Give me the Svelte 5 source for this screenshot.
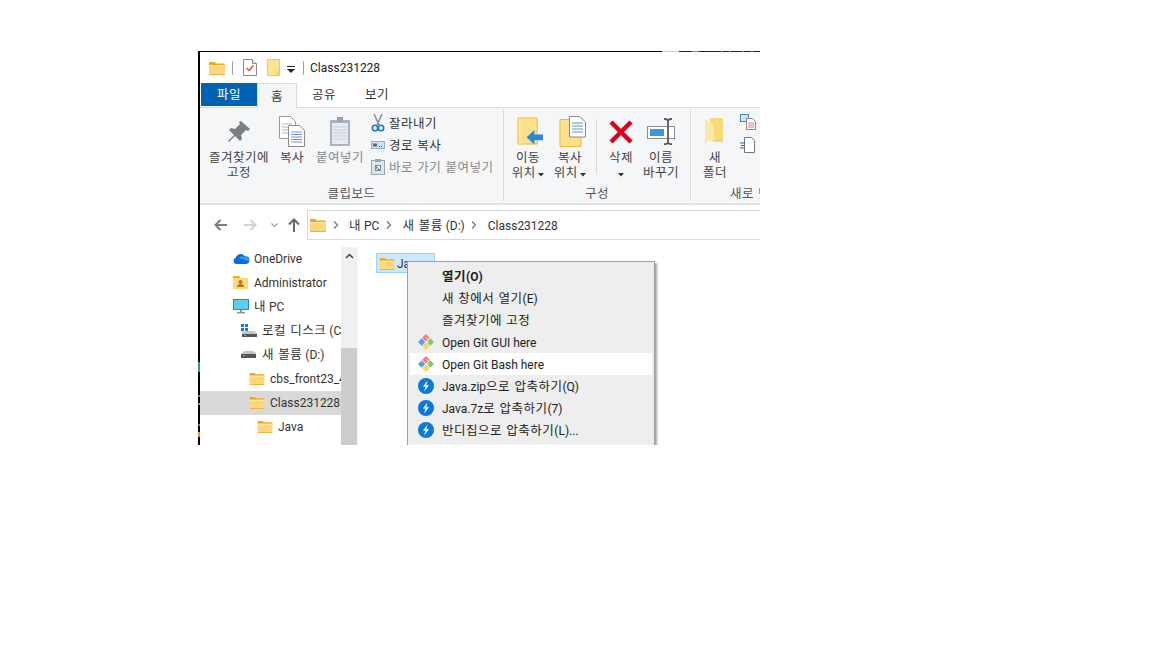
<script>
    const navItems = [
        { label: "OneDrive", icon: "cloud", indent: 33 },
        { label: "Administrator", icon: "user", indent: 33 },
        { label: "내 PC", icon: "pc", indent: 33 },
        { label: "로컬 디스크 (C:)", icon: "diskc", indent: 41 },
        { label: "새 볼륨 (D:)", icon: "disk", indent: 41 },
        { label: "cbs_front23_4", icon: "folder", indent: 49 },
        { label: "Class231228", icon: "folder", indent: 49, active: true },
        { label: "Java", icon: "folder", indent: 57 },
        { label: "", icon: "folder", indent: 57 }
    ]

    const menuItems = [
        { label: "열기(O)", bold: true },
        { label: "새 창에서 열기(E)" },
        { label: "즐겨찾기에 고정" },
        { label: "Open Git GUI here", icon: "git" },
        { label: "Open Git Bash here", icon: "git", hover: true },
        { label: "Java.zip으로 압축하기(Q)", icon: "bz" },
        { label: "Java.7z로 압축하기(7)", icon: "bz" },
        { label: "반디집으로 압축하기(L)..." , icon: "bz" }
    ]

    // hangul and latin need different sizes to get the Malgun/Segoe widths
    function runs(text) {
        return text.split(/([가-힣]+(?: [가-힣]+)*)/).filter(Boolean)
    }
    function isKo(run) {
        return /[가-힣]/.test(run)
    }
</script>

{#snippet t(text)}
    <span class="txt">{#each runs(text) as run}<span class={isKo(run) ? "ko" : "en"}>{run}</span>{/each}</span>
{/snippet}

{#snippet folder(w, h)}
    <svg width={w} height={h} viewBox="0 0 16 14">
        <path d="M0 2a1 1 0 0 1 1-1h4.500l1.500 1.500h8a1 1 0 0 1 1 1V5H0z" fill="#eeaa1c" />
        <path d="M0 4h16v9a1 1 0 0 1-1 1H1a1 1 0 0 1-1-1z" fill="#fcd87a" />
        <path d="M0 4h16v1H0z" fill="#fde9a8" />
        <path d="M0 13h16v1H0z" fill="#e8b34a" />
    </svg>
{/snippet}

{#snippet caret()}
    <svg class="caret" width="6" height="4" viewBox="0 0 6 4"><path d="M0 0h6L3 3.500z" fill="#333" /></svg>
{/snippet}

{#snippet chevron()}
    <svg class="chev" width="6" height="8" viewBox="0 0 6 8"><path d="M1 .5 4.500 4 1 7.500" fill="none" stroke="#777" stroke-width="1.300" /></svg>
{/snippet}

<div class="window">
    <div class="edge"></div>
    <div class="topline"></div>

    <div class="titlebar">
        {@render folder(16, 14)}
        <span class="tsep"></span>
        <svg width="14" height="17" viewBox="0 0 14 17">
            <path d="M.5.5h9l4 4v12H.5z" fill="#fff" stroke="#8a8a8a" />
            <path d="M9.500.5v4h4" fill="#eee" stroke="#8a8a8a" />
            <path d="M3.500 9l2.500 2.500L10.500 6.500" fill="none" stroke="#e2552b" stroke-width="1.500" />
        </svg>
        <svg class="note" width="13" height="17" viewBox="0 0 13 17">
            <path d="M.5.5h12v16H.5z" fill="#fde48f" stroke="#e9c868" />
            <path d="M9.500 12h3v4.500h-3z" fill="#f7cf62" />
        </svg>
        <svg class="qat" width="8" height="7" viewBox="0 0 8 7"><path d="M0 0h8v1H0zM0 3h8L4 7z" fill="#222" /></svg>
        <span class="tsep two"></span>
        <span class="title">{@render t("Class231228")}</span>
    </div>

    <div class="tabs">
        <div class="tab file">{@render t("파일")}</div>
        <div class="tab home">{@render t("홈")}</div>
        <div class="tab share">{@render t("공유")}</div>
        <div class="tab view">{@render t("보기")}</div>
    </div>

    <div class="ribbon">
        <section class="group g1">
            <div class="gbody">
                <div class="rbtn w62">
                    <div class="ico">
                        <svg width="24" height="24" viewBox="0 0 24 24">
                            <path d="M14 1l9 8-2 2-2-1-5 5 1 4-2 2-5-5-6 6-1-1 6-6-5-5 2-2 4 1 5-5-1-2z" fill="#7b7f84" />
                        </svg>
                    </div>
                    <div>{@render t("즐겨찾기에")}<br />{@render t("고정")}</div>
                </div>
                <div class="rbtn w44">
                    <div class="ico">
                        <svg width="26" height="31" viewBox="0 0 26 31">
                            <path d="M.5.5h11l5 5v17H.5z" fill="#fff" stroke="#9a9a9a" />
                            <path d="M3 8h10M3 11h10M3 14h10M3 17h10" stroke="#b5b5b5" />
                            <path d="M9.500 9.500h11l5 5v16h-16z" fill="#fff" stroke="#8a8a8a" />
                            <path d="M12 16h11M12 18.500h11M12 21h11M12 23.500h11M12 26h11" stroke="#6f97d6" />
                        </svg>
                    </div>
                    <div>{@render t("복사")}</div>
                </div>
                <div class="rbtn w52 off">
                    <div class="ico">
                        <svg width="22" height="30" viewBox="0 0 22 30">
                            <rect x="1" y="3" width="20" height="26" rx="1" fill="#a9b3c2" />
                            <rect x="3" y="6" width="16" height="21" fill="#e7ebf2" />
                            <path d="M4 10h14M4 13h14M4 16h14M4 19h14M4 22h14" stroke="#c8cfdb" />
                            <rect x="8" y="0" width="6" height="5" fill="#9aa3b0" />
                        </svg>
                    </div>
                    <div>{@render t("붙여넣기")}</div>
                </div>
                <div class="smalls">
                    <div class="sitem">
                        <svg width="14" height="18" viewBox="0 0 14 18">
                            <path d="M3 0l5 11M11 0 6 11" stroke="#8a8f96" stroke-width="1.500" fill="none" />
                            <circle cx="4" cy="14" r="2.700" fill="none" stroke="#1a78c8" stroke-width="1.600" />
                            <circle cx="10" cy="14" r="2.700" fill="none" stroke="#1a78c8" stroke-width="1.600" />
                        </svg>
                        {@render t("잘라내기")}
                    </div>
                    <div class="sitem">
                        <svg width="14" height="8" viewBox="0 0 14 8">
                            <rect x=".5" y=".5" width="13" height="7" fill="#cfe2f7" stroke="#8fb0d6" />
                            <path d="M2 2.500l1 3 1-3 1 3 1-3M8 5.500h1M10 5.500h1" stroke="#333" stroke-width=".8" fill="none" />
                        </svg>
                        {@render t("경로 복사")}
                    </div>
                    <div class="sitem off">
                        <svg width="14" height="16" viewBox="0 0 14 16">
                            <rect x=".5" y="1.500" width="13" height="14" fill="#dfe4eb" stroke="#9aa5b3" />
                            <rect x="4" y="0" width="6" height="3" fill="#9aa5b3" />
                            <path d="M4 6h6v6H4z" fill="#7e8a99" />
                            <path d="M5 11l3-3M6 7.500h2.500V10" stroke="#fff" fill="none" />
                        </svg>
                        {@render t("바로 가기 붙여넣기")}
                    </div>
                </div>
            </div>
            <div class="glabel">{@render t("클립보드")}</div>
        </section>

        <section class="group g2">
            <div class="gbody">
                <div class="rbtn w42">
                    <div class="ico shift">
                        <svg width="27" height="29" viewBox="0 0 28 29">
                            <path d="M1 .5h20v27H1z" fill="#fde08a" stroke="#e6bd45" />
                            <path d="M3 1v26" stroke="#fbeebd" />
                            <path d="M27 17.500h-9V13l-8 7.500 8 7.500v-4.500h9z" fill="#2b8ad8" />
                        </svg>
                    </div>
                    <div>{@render t("이동")}<br />{@render t("위치")} {@render caret()}</div>
                </div>
                <div class="rbtn w42">
                    <div class="ico shift">
                        <svg width="27" height="31" viewBox="0 0 27 31">
                            <path d="M1 3.500h21v27H1z" fill="#fde08a" stroke="#e6bd45" />
                            <path d="M10.500.5h10l6 5.500v15h-16z" fill="#fff" stroke="#8a8a8a" />
                            <path d="M13 7h11M13 10h11M13 13h11M13 16h11" stroke="#5f8fd2" />
                        </svg>
                    </div>
                    <div>{@render t("복사")}<br />{@render t("위치")} {@render caret()}</div>
                </div>
                <div class="vsep"></div>
                <div class="rbtn w40">
                    <div class="ico">
                        <svg width="26" height="26" viewBox="0 0 26 26">
                            <path d="M3 3l20 20M23 3 3 23" stroke="#d9001b" stroke-width="4.500" />
                        </svg>
                    </div>
                    <div>{@render t("삭제")}<br />{@render caret()}</div>
                </div>
                <div class="rbtn w40">
                    <div class="ico">
                        <svg width="29" height="27" viewBox="0 0 29 27">
                            <rect x=".5" y="8.500" width="27" height="12" fill="#fff" stroke="#8a8f96" />
                            <rect x="3" y="11" width="14" height="7" fill="#3a97e6" />
                            <path d="M21 1v25M17 .8q4 0 4 2.500 0-2.500 4-2.500M17 26.200q4 0 4-2.500 0 2.500 4 2.500" fill="none" stroke="#555" stroke-width="1.700" />
                        </svg>
                    </div>
                    <div>{@render t("이름")}<br />{@render t("바꾸기")}</div>
                </div>
            </div>
            <div class="glabel">{@render t("구성")}</div>
        </section>

        <section class="group g3">
            <div class="gbody">
                <div class="rbtn w42">
                    <div class="ico">
                        <svg width="20" height="28" viewBox="0 0 20 28">
                            <path d="M5 0h13v23H5z" fill="#f8d978" />
                            <path d="M0 1l8 5 2 17H3l-3 4z" fill="#fde9a6" />
                            <path d="M8 23h10" stroke="#e6c25a" />
                        </svg>
                    </div>
                    <div>{@render t("새")}<br />{@render t("폴더")}</div>
                </div>
                <div class="news">
                    <svg width="16" height="16" viewBox="0 0 16 16">
                        <rect x=".5" y=".5" width="8" height="7" fill="#cfe2f7" stroke="#4f86b0" />
                        <path d="M6.500 4.500h6l3 3v8h-9z" fill="#fff" stroke="#888" />
                        <path d="M8 9h6M8 11h6M8 13h6" stroke="#d77b9c" />
                    </svg>
                    <svg width="15" height="16" viewBox="0 0 15 16">
                        <path d="M4.500.5h7l3 3v12h-10z" fill="#fff" stroke="#777" />
                        <path d="M0 6h5M1 8.500h4M0 11h4" stroke="#1a6fc0" stroke-width="1.200" />
                    </svg>
                </div>
            </div>
            <div class="glabel clip">{@render t("새로 만들기")}</div>
        </section>
    </div>

    <div class="addressrow">
        <svg class="nav-a" width="13" height="12" viewBox="0 0 13 12"><path d="M13 6H1.500M6.500 1l-5 5 5 5" fill="none" stroke="#7d7d7d" stroke-width="2" /></svg>
        <svg class="nav-b" width="13" height="12" viewBox="0 0 13 12"><path d="M0 6h11.500M6.500 1l5 5-5 5" fill="none" stroke="#d2d2d2" stroke-width="2" /></svg>
        <svg class="nav-c" width="7" height="5" viewBox="0 0 7 5"><path d="M.5.500 3.500 3.500 6.500.5" fill="none" stroke="#999" stroke-width="1.200" /></svg>
        <svg class="nav-d" width="12" height="14" viewBox="0 0 12 14"><path d="M6 14V1.500M1 6.500l5-5 5 5" fill="none" stroke="#666" stroke-width="2" /></svg>
        <div class="address">
            {@render folder(16, 14)}
            {@render chevron()}
            {@render t("내 PC")}
            {@render chevron()}
            {@render t("새 볼륨 (D:)")}
            {@render chevron()}
            {@render t("Class231228")}
        </div>
    </div>

    <div class="content">
        <nav class="tree">
            {#each navItems as item}
                <div class="row" class:active={item.active} style:padding-left="{item.indent}px">
                    <span class="ticon">
                        {#if item.icon == "cloud"}
                            <svg width="17" height="11" viewBox="0 0 17 11">
                                <path d="M3.500 11a3.200 3.200 0 0 1-.6-6.300A5 5 0 0 1 12 3.400a3.800 3.800 0 0 1 1.200 7.600z" fill="#0a6fd0" />
                                <path d="M6 5.500a3 3 0 0 1 5-1 3.500 3.500 0 0 1 5 4l-5-2z" fill="#2f9af0" />
                            </svg>
                        {:else if item.icon == "user"}
                            <svg width="15" height="13" viewBox="0 0 15 13">
                                <path d="M0 0h6l1 2h8v11H0z" fill="#fcd87a" />
                                <path d="M0 0h6l1 2H0z" fill="#eeaa1c" />
                                <circle cx="7.500" cy="6" r="2" fill="#b5791a" />
                                <path d="M4 11q0-3 3.500-3T11 11z" fill="#b5791a" />
                            </svg>
                        {:else if item.icon == "pc"}
                            <svg width="16" height="15" viewBox="0 0 16 15">
                                <rect width="16" height="11" fill="#1f8fb5" />
                                <rect x="1" y="1" width="14" height="9" fill="#5fcdea" />
                                <path d="M7 11h2v2h3v1.500H4V13h3z" fill="#8a98a3" />
                            </svg>
                        {:else if item.icon == "diskc"}
                            <svg width="16" height="13" viewBox="0 0 16 13">
                                <path d="M0 0h3v3H0zM4 0h3v3H4zM0 4h3v3H0zM4 4h3v3H4z" fill="#1a78d2" />
                                <path d="M1 8l2-1h10l3 2v4H1z" fill="#c4c7c9" />
                                <path d="M1 10h15v3H1z" fill="#555" />
                                <path d="M3 11h2v1H3z" fill="#7ed321" />
                            </svg>
                        {:else if item.icon == "disk"}
                            <svg width="15" height="7" viewBox="0 0 15 7">
                                <path d="M1 2l2-2h9l3 2v1H0z" fill="#c4c7c9" />
                                <path d="M0 3h15v4H0z" fill="#555" />
                                <path d="M2 4h2v1H2z" fill="#7ed321" />
                            </svg>
                        {:else}
                            {@render folder(16, 13)}
                        {/if}
                    </span>
                    <span class="rowtext">{@render t(item.label)}</span>
                </div>
            {/each}
        </nav>

        <div class="scroll">
            <svg class="sup" width="9" height="6" viewBox="0 0 9 6"><path d="M1 5l3.500-3.500L8 5" fill="none" stroke="#444" stroke-width="1.500" /></svg>
            <div class="thumb"></div>
        </div>

        <div class="files">
            <div class="fileitem">
                {@render folder(16, 13)}
                {@render t("Java")}
            </div>
        </div>

        <div class="menu">
            {#each menuItems as m}
                <div class="mitem" class:hover={m.hover} class:bold={m.bold}>
                    <span class="micon">
                        {#if m.icon == "git"}
                            <svg width="16" height="16" viewBox="0 0 16 16">
                                <path d="M8 0l3.700 3.700L8 7.400 4.300 3.700z" fill="#f4787c" />
                                <path d="M12.300 4.300 16 8l-3.700 3.700L8.600 8z" fill="#82c95a" />
                                <path d="M8 8.600l3.700 3.700L8 16l-3.700-3.700z" fill="#f8d65f" />
                                <path d="M3.700 4.300 7.400 8l-3.700 3.700L0 8z" fill="#5f9df2" />
                                <path d="M8 3l2.500 3M8 8l3 0" stroke="#fff" stroke-width=".8" />
                            </svg>
                        {:else if m.icon == "bz"}
                            <svg width="16" height="16" viewBox="0 0 16 16">
                                <circle cx="8" cy="8" r="8" fill="#0c79d6" />
                                <path d="M9.500 2.500 5 8.500h2.600L6 13.500l5-6.200H8.300z" fill="#fff" />
                            </svg>
                        {/if}
                    </span>
                    {@render t(m.label)}
                </div>
            {/each}
        </div>
    </div>
</div>

<style>
    :global(body) {
        margin: 0;
        background: #fff;
    }
    .window {
        position: relative;
        box-sizing: border-box;
        width: 562px;
        height: 394px;
        margin: 51px 0 0 198px;
        padding-left: 2px;
        padding-top: 1px;
        overflow: hidden;
        display: flex;
        flex-direction: column;
        background: #fff;
        font-family: "Noto Sans CJK KR", "Noto Sans", sans-serif;
        font-size: 12px;
        color: #333;
    }
    .txt {
        white-space: pre;
        position: relative;
        top: -1px;
    }
    .ko {
        font-family: "Noto Sans CJK KR", sans-serif;
        font-size: 12.5px;
        letter-spacing: 0.5px;
        word-spacing: 1px;
    }
    .en {
        font-family: Roboto, "Noto Sans CJK KR", sans-serif;
        font-size: 12px;
    }
    .edge {
        position: absolute;
        left: 0;
        top: 0;
        bottom: 0;
        width: 2px;
        background: linear-gradient(
            #000 311px,
            #3a9a6a 311px 321px,
            #000 321px 344px,
            #3a9a8a 344px 346px,
            #000 346px 352px,
            #40b0a0 352px 354px,
            #000 354px 373px,
            #b06a20 373px 375px,
            #000 375px 381px,
            #c9a020 381px 386px,
            #000 386px
        );
    }
    .topline {
        position: absolute;
        left: 0;
        right: 0;
        top: 0;
        height: 1px;
        background: linear-gradient(
            90deg,
            #000 464px,
            #ccc 464px 481px,
            #1c2228 481px 494px,
            #4a90c0 494px 501px,
            #1c2228 501px 523px,
            #4a90c0 523px 525px,
            #1c2228 525px 531px,
            #4a90c0 531px 533px,
            #1c2228 533px 544px,
            #4a90c0 544px 546px,
            #1c2228 546px 553px,
            #4a90c0 553px 555px,
            #1c2228 555px
        );
    }

    .titlebar {
        height: 31px;
        display: flex;
        align-items: center;
        padding-left: 9px;
        flex: none;
    }
    .tsep {
        width: 1px;
        height: 14px;
        background: #a0a0a0;
        margin: 0 10px 0 7px;
    }
    .tsep.two {
        margin: 0 6px 0 8px;
    }
    .note {
        margin-left: 10px;
    }
    .qat {
        margin-left: 7px;
        margin-top: 3px;
    }
    .title {
        color: #222;
    }

    .tabs {
        height: 25px;
        display: flex;
        flex: none;
        position: relative;
        z-index: 1;
        border-bottom: 1px solid #dadbdc;
        box-sizing: border-box;
    }
    .tab {
        display: flex;
        align-items: center;
        justify-content: center;
        height: 23px;
        color: #333;
    }
    .file {
        width: 56px;
        margin-left: 1px;
        background: #0063b1;
        color: #fff;
    }
    .home {
        width: 40px;
        height: 25px;
        box-sizing: border-box;
        background: #f5f6f7;
        border: 1px solid #dadbdc;
        border-bottom: 0;
    }
    .share {
        width: 54px;
    }
    .view {
        width: 52px;
    }

    .ribbon {
        height: 97px;
        box-sizing: border-box;
        flex: none;
        display: flex;
        background: #f5f6f7;
        border-bottom: 2px solid #e1e2e3;
    }
    .group {
        flex: none;
        box-sizing: border-box;
        display: flex;
        flex-direction: column;
        padding-top: 3px;
        margin: 2px 0;
        border-right: 1px solid #dadbdc;
    }
    .g1 {
        width: 304px;
        padding-left: 8px;
    }
    .g2 {
        width: 187px;
        padding-left: 3px;
    }
    .g3 {
        width: 80px;
        padding-left: 3px;
        border-right: 0;
    }
    .gbody {
        height: 72px;
        display: flex;
        flex: none;
    }
    .glabel {
        text-align: center;
        line-height: 16px;
        margin-top: 1px;
        color: #555;
    }
    .g1 .glabel {
        padding-right: 8px;
    }
    .g2 .glabel {
        padding-right: 3px;
    }
    .clip {
        white-space: nowrap;
        overflow: hidden;
        padding-left: 36px;
        text-align: left;
    }
    .rbtn {
        flex: none;
        display: flex;
        flex-direction: column;
        align-items: center;
        text-align: center;
        line-height: 15px;
        color: #444;
    }
    .rbtn.off,
    .sitem.off {
        color: #888;
    }
    .ico {
        height: 37px;
        display: flex;
        align-items: center;
        justify-content: center;
    }
    .ico.shift {
        margin-left: 5px;
    }
    .w62 {
        width: 62px;
    }
    .w44 {
        width: 44px;
    }
    .w52 {
        width: 52px;
    }
    .w42 {
        width: 42px;
    }
    .w40 {
        width: 40px;
    }
    .caret {
        vertical-align: middle;
    }
    .vsep {
        width: 1px;
        height: 55px;
        margin: 6px 4px 0 5px;
        background: #dadbdc;
    }
    .smalls {
        margin-left: 5px;
        display: flex;
        flex-direction: column;
        gap: 2px;
    }
    .sitem {
        height: 20px;
        display: flex;
        align-items: center;
        gap: 4px;
        white-space: nowrap;
    }
    .sitem svg {
        flex: none;
        width: 14px;
    }
    .news {
        display: flex;
        flex-direction: column;
        gap: 7px;
        margin-left: 4px;
        margin-top: 1px;
    }

    .addressrow {
        height: 40px;
        flex: none;
        display: flex;
        align-items: center;
        padding-left: 14px;
    }
    .nav-b {
        margin-left: 17px;
    }
    .nav-c {
        margin-left: 14px;
    }
    .nav-d {
        margin-left: 10px;
    }
    .address {
        box-sizing: border-box;
        flex: 1;
        margin-left: 7px;
        height: 30px;
        border: 1px solid #d9d9d9;
        border-right: 0;
        display: flex;
        align-items: center;
        padding-left: 2px;
        color: #333;
    }
    .chev {
        margin: 0 10.5px 0 6.5px;
    }

    .content {
        position: relative;
        flex: 1;
        min-height: 0;
        display: flex;
    }
    .tree {
        width: 141px;
        flex: none;
        overflow: hidden;
        padding-top: 2px;
    }
    .row {
        height: 24px;
        box-sizing: border-box;
        padding-bottom: 2px;
        display: flex;
        align-items: center;
        white-space: nowrap;
        color: #333;
    }
    .row.active {
        background: #d9d9d9;
    }
    .ticon {
        width: 21px;
        flex: none;
        display: flex;
        align-items: center;
        justify-content: flex-start;
    }
    .scroll {
        width: 16px;
        flex: none;
        margin-top: 2px;
        background: #f0f0f0;
        position: relative;
        display: flex;
        flex-direction: column;
        align-items: center;
    }
    .sup {
        margin-top: 6px;
    }
    .thumb {
        position: absolute;
        left: 0;
        right: 0;
        top: 101px;
        bottom: 0;
        background: #cdcdcd;
    }
    .files {
        flex: 1;
        padding: 8px 0 0 18px;
        border-left: 1px solid #f4f4f4;
    }
    .fileitem {
        box-sizing: border-box;
        width: 59px;
        height: 20px;
        display: flex;
        align-items: center;
        gap: 2px;
        padding-left: 2px;
        background: #cce8ff;
        border: 1px solid #99d1ff;
        color: #333;
    }

    .menu {
        position: absolute;
        left: 207px;
        top: 16px;
        width: 248px;
        box-sizing: border-box;
        background: #eeeeee;
        border: 1px solid #a0a0a0;
        box-shadow: 2px 2px 2px rgba(0, 0, 0, 0.35);
        padding: 3px 2px 40px;
        color: #222;
    }
    .mitem {
        height: 22px;
        display: flex;
        align-items: center;
    }
    .mitem.hover {
        background: #fff;
    }
    .mitem.bold {
        font-weight: 700;
    }
    .micon {
        width: 32px;
        padding-left: 8px;
        box-sizing: border-box;
        flex: none;
        display: flex;
        align-items: center;
    }
</style>
